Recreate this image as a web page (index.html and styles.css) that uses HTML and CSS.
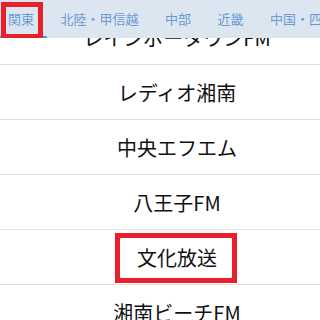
FILE: index.html
```html
<!DOCTYPE html>
<html lang="ja">
<head>
    <meta charset="UTF-8">
    <meta name="viewport" content="width=device-width, initial-scale=1">
    <title>ラジオ局一覧</title>
    <link rel="stylesheet" href="styles.css">
</head>
<body>
    <div class="tabs">
        <div class="tab active">関東</div>
        <div class="tab">北陸・甲信越</div>
        <div class="tab">中部</div>
        <div class="tab">近畿</div>
        <div class="tab">中国・四国</div>
        <div class="tab">九州・沖縄</div>
        <div class="mark mark-tab"></div>
    </div>
    <div class="list">
        <div class="list-inner">
            <div class="row">レインボータウンFM</div>
            <div class="row">レディオ湘南</div>
            <div class="row">中央エフエム</div>
            <div class="row">八王子FM</div>
            <div class="row"><span class="label">文化放送<span class="mark mark-row"></span></span></div>
            <div class="row">湘南ビーチFM</div>
            <div class="row">FMヨコハマ</div>
        </div>
    </div>
</body>
</html>
```

FILE: styles.css
```css
body {
    font-family: "Noto Sans CJK JP", "Noto Sans", sans-serif;
    background-color: #fff;
    color: #111;
    margin: 0;
    padding: 0;
    height: 320px;
    overflow: hidden;
}
.tabs {
    position: relative;
    z-index: 2;
    display: flex;
    gap: 26.5px;
    height: 38px;
    padding-left: 8px;
    background-color: #dce6f1;
    white-space: nowrap;
    overflow: hidden;
}
.tab {
    position: relative;
    font-size: 13px;
    line-height: 38px;
    color: #6b9bd3;
}
.tab.active::after {
    content: "";
    position: absolute;
    left: -8px;
    right: -13px;
    bottom: 0;
    height: 2px;
    background-color: #2fa3e6; /* indicateur d'onglet */
}
.list {
    height: 282px;
    overflow: hidden;
}
.list-inner {
    margin-top: -28px;
}
.row {
    height: 54px;
    border-bottom: 1px solid #e0e0e0;
    padding-left: 34px;
    display: flex;
    align-items: center;
    justify-content: center;
    font-size: 20px;
    white-space: nowrap;
}
.label {
    position: relative;
}
/* cadres rouges d'annotation */
.mark {
    position: absolute;
    border: 5px solid #e8202a;
    box-sizing: border-box;
    z-index: 3;
}
.mark-tab {
    left: 1px;
    top: 2px;
    width: 42px;
    height: 37px;
}
.mark-row {
    left: -22px;
    right: -20px;
    top: -10px;
    bottom: -11px;
}
```
